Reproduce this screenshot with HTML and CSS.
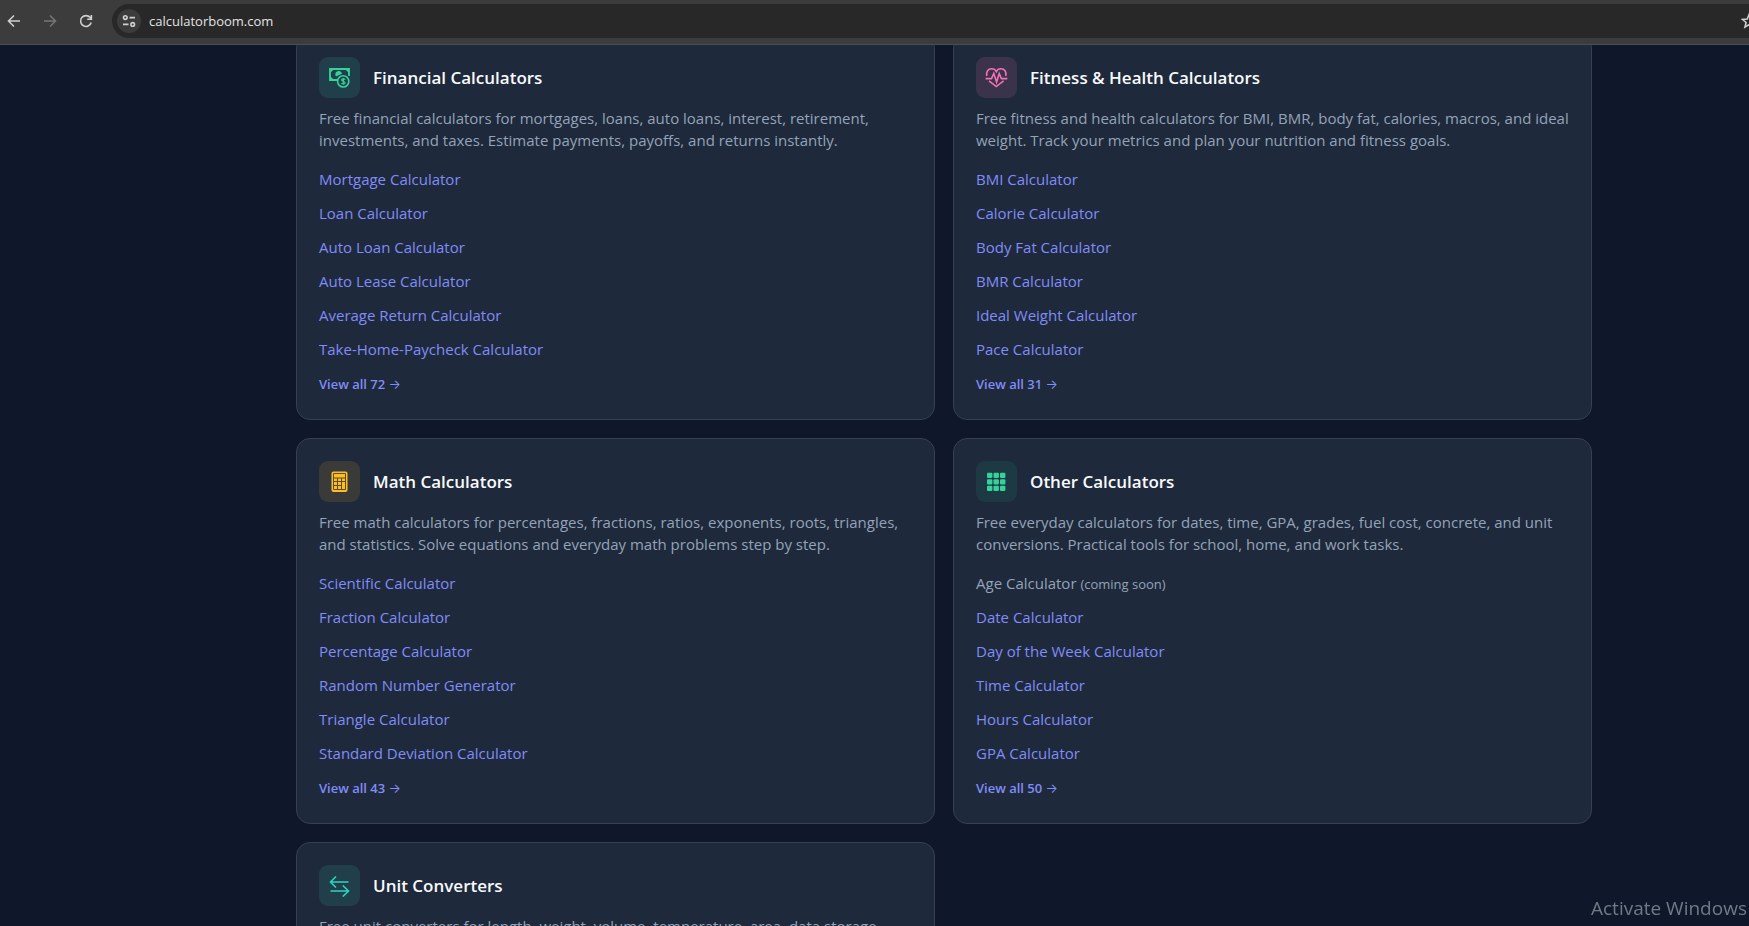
FILE: index.html
```html
<!DOCTYPE html>
<html lang="en">
<head>
    <meta charset="utf-8">
    <title>CalculatorBoom</title>
    <link rel="stylesheet" href="styles.css">
</head>
<body>
    <header class="toolbar">
        <button class="nav-btn" aria-label="Back">
            <svg viewBox="0 0 16 16"><path d="M14 8H3M8 2.5L2.5 8L8 13.5"/></svg>
        </button>
        <button class="nav-btn disabled" aria-label="Forward">
            <svg viewBox="0 0 16 16"><path d="M2 8h11M8 2.5L13.5 8L8 13.5"/></svg>
        </button>
        <button class="nav-btn" aria-label="Reload">
            <svg viewBox="0 0 16 16"><path d="M13.2 9.5A5.4 5.4 0 1 1 12.2 4.6L13 5.6M13.4 2v4.2H9.2"/></svg>
        </button>
        <div class="address-bar">
            <button class="site-info" aria-label="Site information">
                <svg viewBox="0 0 16 16"><circle cx="4.3" cy="4.6" r="1.8"/><path d="M8.5 4.6H14M2 11.4h5.5"/><circle cx="11.7" cy="11.4" r="1.8"/></svg>
            </button>
            <input class="url" type="text" value="calculatorboom.com" aria-label="Address">
            <button class="bookmark" aria-label="Bookmark this page">
                <svg viewBox="0 0 16 16"><path d="M8 1.8l1.8 4.3 4.7.4-3.6 3 1.1 4.6L8 11.6l-4 2.5 1.1-4.6-3.6-3 4.7-.4z"/></svg>
            </button>
        </div>
    </header>

    <main class="categories">
        <section class="card">
            <div class="card-header">
                <span class="icon green">
                    <svg viewBox="0 0 23 23">
                        <path d="M9 14H2V3h19v7" stroke-width="1.8"/>
                        <path d="M2 3h4.2L2 7zM21 3h-4.2L21 7zM2 14h4.2L2 10z" fill="currentColor" stroke="none"/>
                        <path d="M8 10.5a3.4 3.4 0 1 1 6-2.8L10.5 9.3z" fill="currentColor" stroke="none"/>
                        <circle cx="15.2" cy="15.4" r="5.6"/>
                        <path d="M17 13.7c-.6-1.2-3.4-1.1-3.4.3s3.5 1.1 3.5 2.7-3 1.6-3.7.2M15.3 12v6.8" stroke-width="1.2"/>
                    </svg>
                </span>
                <h2>Financial Calculators</h2>
            </div>
            <p>Free financial calculators for mortgages, loans, auto loans, interest, retirement, investments, and taxes. Estimate payments, payoffs, and returns instantly.</p>
            <ul>
                <li><a href="#">Mortgage Calculator</a></li>
                <li><a href="#">Loan Calculator</a></li>
                <li><a href="#">Auto Loan Calculator</a></li>
                <li><a href="#">Auto Lease Calculator</a></li>
                <li><a href="#">Average Return Calculator</a></li>
                <li><a href="#">Take-Home-Paycheck Calculator</a></li>
            </ul>
            <a class="view-all" href="#">View all 72 <span class="arrow">→</span></a>
        </section>

        <section class="card">
            <div class="card-header">
                <span class="icon pink">
                    <svg viewBox="0 0 23 23">
                        <path d="M1.8 10C.8 5.8 3.2 2.7 6.6 2.7C8.7 2.7 10.5 3.8 11.3 5.6C12.1 3.8 13.9 2.7 16 2.7C19.4 2.7 21.8 5.8 20.8 10"/>
                        <path d="M4 14.8L11.3 20.6L18.6 14.8"/>
                        <path d="M.6 12.6H6.5L8.8 7.4L11.6 16L14.2 7.6L16.4 12.6H22.3"/>
                    </svg>
                </span>
                <h2>Fitness &amp; Health Calculators</h2>
            </div>
            <p>Free fitness and health calculators for BMI, BMR, body fat, calories, macros, and ideal weight. Track your metrics and plan your nutrition and fitness goals.</p>
            <ul>
                <li><a href="#">BMI Calculator</a></li>
                <li><a href="#">Calorie Calculator</a></li>
                <li><a href="#">Body Fat Calculator</a></li>
                <li><a href="#">BMR Calculator</a></li>
                <li><a href="#">Ideal Weight Calculator</a></li>
                <li><a href="#">Pace Calculator</a></li>
            </ul>
            <a class="view-all" href="#">View all 31 <span class="arrow">→</span></a>
        </section>

        <section class="card">
            <div class="card-header">
                <span class="icon amber">
                    <svg viewBox="0 0 23 23">
                        <rect x="3.5" y="1.5" width="16" height="20.5" rx="2" fill="currentColor" stroke="none"/>
                        <path class="cut" d="M5.5 3.5h12M5.5 8h12M5.5 11.5h12M5.5 15.5h8M5.5 19.5h12M5.5 3.5v16M9.5 8v11.5M13.5 8v11.5M17.5 3.5v16"/>
                    </svg>
                </span>
                <h2>Math Calculators</h2>
            </div>
            <p>Free math calculators for percentages, fractions, ratios, exponents, roots, triangles, and statistics. Solve equations and everyday math problems step by step.</p>
            <ul>
                <li><a href="#">Scientific Calculator</a></li>
                <li><a href="#">Fraction Calculator</a></li>
                <li><a href="#">Percentage Calculator</a></li>
                <li><a href="#">Random Number Generator</a></li>
                <li><a href="#">Triangle Calculator</a></li>
                <li><a href="#">Standard Deviation Calculator</a></li>
            </ul>
            <a class="view-all" href="#">View all 43 <span class="arrow">→</span></a>
        </section>

        <section class="card">
            <div class="card-header">
                <span class="icon emerald">
                    <svg viewBox="0 0 23 23">
                        <g fill="currentColor" stroke="none">
                            <rect x="2" y="2.7" width="5.4" height="5.4" rx="1"/>
                            <rect x="8.5" y="2.7" width="5.4" height="5.4" rx="1"/>
                            <rect x="15" y="2.7" width="5.4" height="5.4" rx="1"/>
                            <rect x="2" y="9.2" width="5.4" height="5.4" rx="1"/>
                            <rect x="8.5" y="9.2" width="5.4" height="5.4" rx="1"/>
                            <rect x="15" y="9.2" width="5.4" height="5.4" rx="1"/>
                            <rect x="2" y="15.7" width="5.4" height="5.4" rx="1"/>
                            <rect x="8.5" y="15.7" width="5.4" height="5.4" rx="1"/>
                            <rect x="15" y="15.7" width="5.4" height="5.4" rx="1"/>
                        </g>
                    </svg>
                </span>
                <h2>Other Calculators</h2>
            </div>
            <p>Free everyday calculators for dates, time, GPA, grades, fuel cost, concrete, and unit conversions. Practical tools for school, home, and work tasks.</p>
            <ul>
                <li>Age Calculator <small>(coming soon)</small></li>
                <li><a href="#">Date Calculator</a></li>
                <li><a href="#">Day of the Week Calculator</a></li>
                <li><a href="#">Time Calculator</a></li>
                <li><a href="#">Hours Calculator</a></li>
                <li><a href="#">GPA Calculator</a></li>
            </ul>
            <a class="view-all" href="#">View all 50 <span class="arrow">→</span></a>
        </section>

        <section class="card">
            <div class="card-header">
                <span class="icon teal">
                    <svg viewBox="0 0 23 23"><path d="M20.5 8H2.5M8 2.5L2.5 8L8 13.5M2.5 17H20.5M14.8 11.5L20.5 17L14.8 22.5"/></svg>
                </span>
                <h2>Unit Converters</h2>
            </div>
            <p>Free unit converters for length, weight, volume, temperature, area, data storage,</p>
        </section>
    </main>

    <div class="watermark">
        <strong>Activate Windows</strong>
        <span>Go to Settings to activate Windows.</span>
    </div>
</body>
</html>
```
FILE: styles.css
```css
* {
    box-sizing: border-box;
}
body {
    margin: 0;
    height: 100vh;
    overflow: hidden;
    background-color: #0e182a;
    color: #94a3b8;
    font-family: 'Segoe UI', 'Open Sans', 'Noto Sans', sans-serif;
    font-size: 15px;
}
button {
    display: flex;
    align-items: center;
    justify-content: center;
    padding: 0;
    border: none;
    background: none;
    color: #cfcfcf;
    flex-shrink: 0;
}
svg {
    display: block;
    fill: none;
    stroke: currentColor;
    stroke-width: 1.6;
}

/* browser toolbar */
.toolbar {
    position: fixed;
    top: 0;
    left: 0;
    right: 0;
    z-index: 1;
    display: flex;
    align-items: center;
    height: 45px;
    padding: 0 0 2px 6px;
    background-color: #3c3c3c;
    border-bottom: 1px solid #4a4e54;
}
.nav-btn {
    width: 16px;
    margin-right: 20px;
}
.nav-btn svg,
.site-info svg,
.bookmark svg {
    width: 16px;
    height: 16px;
}
.nav-btn.disabled {
    color: #757575;
}
.address-bar {
    flex: 1;
    display: flex;
    align-items: center;
    height: 34px;
    margin-left: -2px;
    padding-left: 5px;
    background-color: #282828;
    border-radius: 17px 0 0 17px;
}
.site-info {
    width: 24px;
    height: 24px;
    border-radius: 50%;
    background-color: #3c3c3c;
}
.url {
    flex: 1;
    margin-left: 8px;
    padding: 0;
    border: none;
    outline: none;
    background: none;
    color: #e3e3e3;
    font-family: inherit;
    font-size: 13px;
}
.bookmark {
    width: 16px;
    margin-right: -8px;
}

/* category cards */
.categories {
    display: grid;
    grid-template-columns: 1fr 1fr;
    gap: 18px;
    padding: 34px 157px 18px 296px;
}
.card {
    padding: 22px 22px 23px;
    background-color: #1e293b;
    border: 1px solid #334155;
    border-radius: 14px;
}
.card-header {
    display: flex;
    align-items: center;
    gap: 13px;
}
.icon {
    display: flex;
    align-items: center;
    justify-content: center;
    width: 41px;
    height: 41px;
    border-radius: 9px;
}
.icon svg {
    width: 23px;
    height: 23px;
}
.green {
    color: #34d399;
    background-color: #213f4a;
}
.pink {
    color: #f472b6;
    background-color: #3b334b;
}
.amber {
    color: #fbbf24;
    background-color: #3a3a38;
}
.emerald {
    color: #34d399;
    background-color: #1d3a44;
}
.teal {
    color: #2dd4bf;
    background-color: #203f4a;
}
.cut {
    stroke: #5c4a26;
    stroke-width: 1;
}
h2 {
    margin: 0;
    color: #f8fafc;
    font-size: 17px;
    font-weight: 600;
    line-height: 24px;
}
p {
    margin: 9px 0 16px;
    line-height: 22px;
}
ul {
    display: flex;
    flex-direction: column;
    gap: 10px;
    margin: 0 0 11px;
    padding: 0;
    list-style: none;
    line-height: 24px;
}
small {
    font-size: 13px;
    line-height: 1;
}
a {
    color: #818cf8;
    text-decoration: none;
}
.view-all {
    display: block;
    font-size: 13px;
    font-weight: 600;
    line-height: 24px;
}
.arrow {
    font-family: 'Inter', sans-serif;
    font-weight: 400;
    line-height: 1;
}

/* desktop watermark */
.watermark {
    position: fixed;
    top: 894px;
    right: 2px;
    width: 156px;
    color: #727986;
    white-space: nowrap;
    line-height: 16px;
}
.watermark strong {
    display: block;
    font-size: 19px;
    font-weight: 400;
    line-height: 28px;
}
```
